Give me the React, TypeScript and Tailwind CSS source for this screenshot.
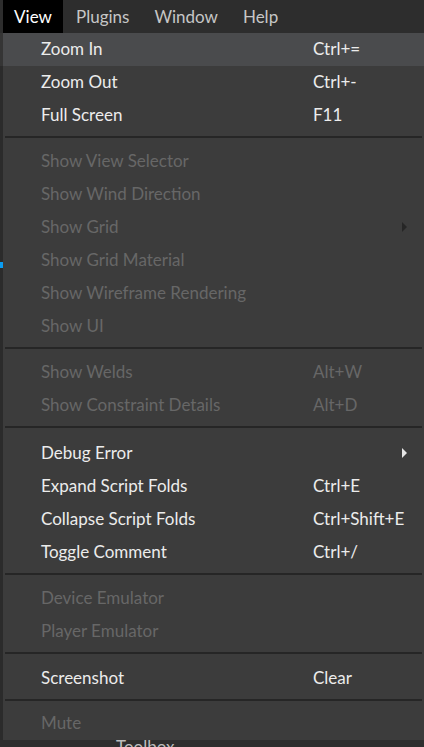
import React from "react";

type Item =
  | { kind: "item"; label: string; shortcut?: string; disabled?: boolean; submenu?: boolean; active?: boolean }
  | { kind: "sep"; h: string };

const items: Item[] = [
  { kind: "item", label: "Zoom In", shortcut: "Ctrl+=", active: true },
  { kind: "item", label: "Zoom Out", shortcut: "Ctrl+-" },
  { kind: "item", label: "Full Screen", shortcut: "F11" },
  { kind: "sep", h: "h-[13px]" },
  { kind: "item", label: "Show View Selector", disabled: true },
  { kind: "item", label: "Show Wind Direction", disabled: true },
  { kind: "item", label: "Show Grid", disabled: true, submenu: true },
  { kind: "item", label: "Show Grid Material", disabled: true },
  { kind: "item", label: "Show Wireframe Rendering", disabled: true },
  { kind: "item", label: "Show UI", disabled: true },
  { kind: "sep", h: "h-[13px]" },
  { kind: "item", label: "Show Welds", shortcut: "Alt+W", disabled: true },
  { kind: "item", label: "Show Constraint Details", shortcut: "Alt+D", disabled: true },
  { kind: "sep", h: "h-[15px]" },
  { kind: "item", label: "Debug Error", submenu: true },
  { kind: "item", label: "Expand Script Folds", shortcut: "Ctrl+E" },
  { kind: "item", label: "Collapse Script Folds", shortcut: "Ctrl+Shift+E" },
  { kind: "item", label: "Toggle Comment", shortcut: "Ctrl+/" },
  { kind: "sep", h: "h-[13px]" },
  { kind: "item", label: "Device Emulator", disabled: true },
  { kind: "item", label: "Player Emulator", disabled: true },
  { kind: "sep", h: "h-[14px]" },
  { kind: "item", label: "Screenshot", shortcut: "Clear" },
  { kind: "sep", h: "h-[12px]" },
  { kind: "item", label: "Mute", disabled: true },
];

const menuBar = ["View", "Plugins", "Window", "Help"];

function Arrow({ disabled }: { disabled?: boolean }) {
  return (
    <svg width="6" height="10" viewBox="0 0 6 10" className="absolute left-[399px] top-[11px]">
      <path d="M0 0 L5 5 L0 10 Z" fill={disabled ? "#262626" : "#e6e6e6"} />
    </svg>
  );
}

export default function App() {
  return (
    <div className="w-[424px] h-[747px] overflow-hidden bg-[#2e2e2e] flex flex-col font-['Lato',sans-serif] text-[17px]">
      {/* menu bar */}
      <div className="h-[33px] shrink-0 flex items-stretch pl-[3px] bg-[#2d2d2d]">
        {menuBar.map((m, i) => (
          <div
            key={m}
            className={
              i === 0
                ? "bg-black text-white w-[60px] flex items-center justify-center"
                : "text-[#c6c6c6] px-[12px] ml-[1px] flex items-center"
            }
          >
            {m}
          </div>
        ))}
      </div>

      <div className="flex flex-1 min-h-0">
        {/* app behind the menu */}
        <div className="w-[3px] shrink-0 bg-[#2b2b2b] flex flex-col">
          <div className="h-[33px] bg-[#353535]" />
          <div className="h-[196px]" />
          <div className="h-[6px] bg-[#0a9cf2]" />
        </div>

        {/* dropdown */}
        <div className="flex-1 bg-[#3c3c3c] self-start">
          {items.map((it, i) =>
            it.kind === "sep" ? (
              <div key={i} className={it.h + " pt-[4px] px-[2px]"}>
                <div className="h-[2px] bg-[#262626]" />
              </div>
            ) : (
              <div
                key={i}
                className={
                  "relative h-[33px] flex items-center pb-[2px] pl-[38px] " +
                  (it.active ? "bg-[#4a4b4d] " : "") +
                  (it.disabled ? "text-[#676767]" : "text-[#ececec]")
                }
              >
                <span className="w-[272px] shrink-0">{it.label}</span>
                {it.shortcut && <span>{it.shortcut}</span>}
                {it.submenu && <Arrow disabled={it.disabled} />}
              </div>
            )
          )}
        </div>
      </div>

      {/* panel underneath, mostly hidden */}
      <div className="h-[7px] shrink-0 bg-[#2e2e2e] relative overflow-hidden">
        <span className="absolute left-[116px] top-[-2px] text-[#bdbdbd] leading-none">Toolbox</span>
      </div>
    </div>
  );
}
